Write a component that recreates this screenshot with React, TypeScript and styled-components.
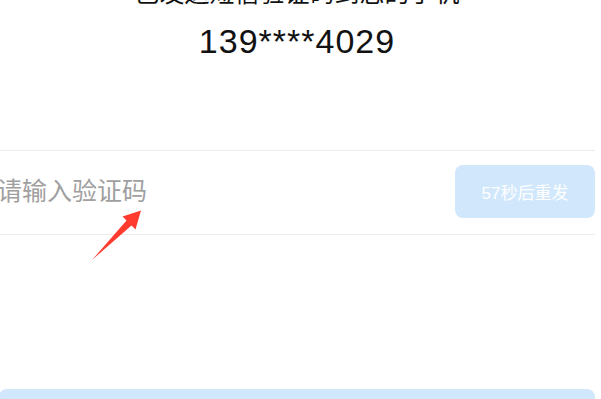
import styled, { createGlobalStyle } from "styled-components";

const GlobalStyle = createGlobalStyle`
  html, body {
    margin: 0;
    padding: 0;
    background: #ffffff;
    overflow: hidden;
  }

  body {
    font-family: "Liberation Sans", "Noto Sans CJK SC", sans-serif;
  }
`;

const Page = styled.div`
  position: relative;
  width: 596px;
  margin-left: -1px;
  margin-top: -22px;
`;

const Hint = styled.h2`
  margin: 0;
  font-size: 25px;
  line-height: 30px;
  font-weight: normal;
  color: #111111;
  text-align: center;
`;

const Phone = styled.div`
  margin-top: 13px;
  font-size: 34px;
  line-height: 40px;
  letter-spacing: 1px;
  color: #111111;
  text-align: center;
`;

const CodeRow = styled.div`
  margin-top: 89px;
  height: 83px;
  display: flex;
  align-items: center;
  justify-content: space-between;
  border-top: 1px solid #ececec;
  border-bottom: 1px solid #ececec;
`;

const CodeInput = styled.input`
  flex: 1;
  min-width: 0;
  margin-left: -2px;
  margin-top: -3px;
  border: none;
  outline: none;
  background: transparent;
  font-family: "Liberation Sans", "Noto Sans CJK SC", sans-serif;
  font-size: 25px;
  color: #333333;
  padding: 0;

  &::placeholder {
    color: #a0a0a0;
  }
`;

const ResendButton = styled.button`
  width: 140px;
  height: 53px;
  margin-top: -2px;
  border: none;
  border-radius: 8px;
  background: #d1e7fc;
  color: #ffffff;
  font-family: "Liberation Sans", "Noto Sans CJK SC", sans-serif;
  font-size: 17px;
`;

const SubmitButton = styled.button`
  display: block;
  width: 596px;
  height: 52px;
  margin-top: 154px;
  border: none;
  border-radius: 8px;
  background: #d1e7fc;
`;

const Arrow = styled.svg`
  position: absolute;
  left: 86px;
  top: 227px;
  width: 60px;
  height: 60px;
`;

export default function App() {
  return (
    <>
      <GlobalStyle />
      <Page>
        <Hint>已发送短信验证码到您的手机</Hint>
        <Phone>139****4029</Phone>
        <CodeRow>
          <CodeInput placeholder="请输入验证码" />
          <ResendButton disabled>57秒后重发</ResendButton>
        </CodeRow>
        <SubmitButton />
        <Arrow viewBox="0 0 60 60">
          <path
            d="M7 55 L46.5 20.5 L50.5 24.5 L56 5.5 L37.5 11.5 L41.5 15.5 Z"
            fill="#ff3b30"
          />
        </Arrow>
      </Page>
    </>
  );
}
